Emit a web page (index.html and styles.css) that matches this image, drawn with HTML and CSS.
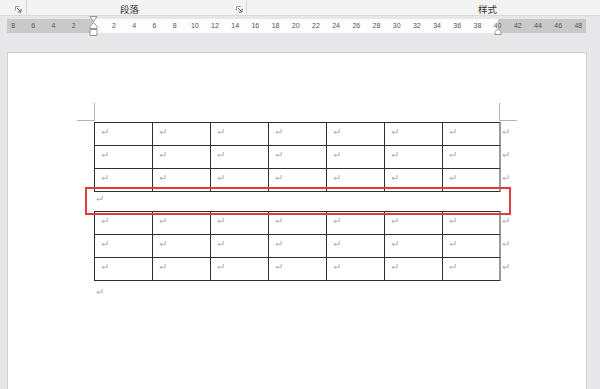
FILE: index.html
```html
<!DOCTYPE html>
<html lang="zh">
<head>
<meta charset="utf-8">
<title>表格</title>
<link rel="stylesheet" href="styles.css">
</head>
<body>
<div class="toolbar">
  <div class="grp g1">
    <svg class="launcher" width="7" height="7" viewBox="0 0 7 7"><path d="M0.5 4.5V0.5H4.5" stroke="#9a9a9a" fill="none"/><path d="M2 2L5.5 5.5M2.8 6H6V2.8" stroke="#555" fill="none" stroke-width="0.9"/></svg>
  </div>
  <div class="grp g2">
    <span class="label">段落</span>
    <svg class="launcher" width="7" height="7" viewBox="0 0 7 7"><path d="M0.5 4.5V0.5H4.5" stroke="#9a9a9a" fill="none"/><path d="M2 2L5.5 5.5M2.8 6H6V2.8" stroke="#555" fill="none" stroke-width="0.9"/></svg>
  </div>
  <div class="grp g3">
    <span class="label">样式</span>
  </div>
</div>

<div class="ruler-wrap">
  <div class="ruler">
    <span>8</span><span>6</span><span>4</span><span>2</span><span></span>
    <span>2</span><span>4</span><span>6</span><span>8</span><span>10</span><span>12</span><span>14</span><span>16</span><span>18</span><span>20</span>
    <span>22</span><span>24</span><span>26</span><span>28</span><span>30</span><span>32</span><span>34</span><span>36</span><span>38</span>
    <span>40</span><span>42</span><span>44</span><span>46</span><span>48</span>
  </div>
  <svg class="indent-left" width="10" height="22" viewBox="0 0 10 22">
    <path d="M1 1.5H8L4.5 6.5Z" fill="#fff" stroke="#8a8a8a" stroke-width="0.9"/>
    <path d="M4.5 7.5L8 11.5V13.5H1V11.5Z" fill="#fff" stroke="#8a8a8a" stroke-width="0.9"/>
    <path d="M1 14.5H8V20.5H1Z" fill="#fff" stroke="#8a8a8a" stroke-width="0.9"/>
  </svg>
  <svg class="indent-right" width="8" height="7" viewBox="0 0 8 7">
    <path d="M1 6.5V3.5L4 0.7L7 3.5V6.5Z" fill="#fff" stroke="#8a8a8a" stroke-width="0.9"/>
  </svg>
</div>

<div class="page">
  <div class="marks"><div class="mk-l"></div><div class="mk-gap"></div><div class="mk-r"></div></div>

  <div class="grid first">
    <div class="c"><i class="pm"></i></div><div class="c"><i class="pm"></i></div><div class="c"><i class="pm"></i></div><div class="c"><i class="pm"></i></div><div class="c"><i class="pm"></i></div><div class="c"><i class="pm"></i></div><div class="c r"><i class="pm"></i></div><div class="end"><i class="pm"></i></div>
    <div class="c"><i class="pm"></i></div><div class="c"><i class="pm"></i></div><div class="c"><i class="pm"></i></div><div class="c"><i class="pm"></i></div><div class="c"><i class="pm"></i></div><div class="c"><i class="pm"></i></div><div class="c r"><i class="pm"></i></div><div class="end"><i class="pm"></i></div>
    <div class="c b"><i class="pm"></i></div><div class="c b"><i class="pm"></i></div><div class="c b"><i class="pm"></i></div><div class="c b"><i class="pm"></i></div><div class="c b"><i class="pm"></i></div><div class="c b"><i class="pm"></i></div><div class="c r b"><i class="pm"></i></div><div class="end"><i class="pm"></i></div>
  </div>

  <div class="para gap"><i class="pm"></i></div>

  <div class="grid">
    <div class="c"><i class="pm"></i></div><div class="c"><i class="pm"></i></div><div class="c"><i class="pm"></i></div><div class="c"><i class="pm"></i></div><div class="c"><i class="pm"></i></div><div class="c"><i class="pm"></i></div><div class="c r"><i class="pm"></i></div><div class="end"><i class="pm"></i></div>
    <div class="c"><i class="pm"></i></div><div class="c"><i class="pm"></i></div><div class="c"><i class="pm"></i></div><div class="c"><i class="pm"></i></div><div class="c"><i class="pm"></i></div><div class="c"><i class="pm"></i></div><div class="c r"><i class="pm"></i></div><div class="end"><i class="pm"></i></div>
    <div class="c b"><i class="pm"></i></div><div class="c b"><i class="pm"></i></div><div class="c b"><i class="pm"></i></div><div class="c b"><i class="pm"></i></div><div class="c b"><i class="pm"></i></div><div class="c b"><i class="pm"></i></div><div class="c r b"><i class="pm"></i></div><div class="end"><i class="pm"></i></div>
  </div>

  <div class="para after"><i class="pm"></i></div>

  <div class="highlight"></div>
</div>
</body>
</html>
```

FILE: styles.css
```css
html, body {
  margin: 0;
  padding: 0;
}
body {
  width: 600px;
  height: 389px;
  overflow: hidden;
  background: #e7e6e9;
  font-family: "Liberation Sans", "Noto Sans CJK SC", sans-serif;
}

/* ribbon group strip */
.toolbar {
  display: flex;
  height: 15px;
  background: #f3f3f4;
  border-bottom: 1px solid #dadada;
}
.grp {
  display: flex;
  align-items: center;
  border-right: 1px solid #d6d6d6;
  height: 15px;
  box-sizing: border-box;
}
.g1 {
  width: 27px;
  justify-content: flex-end;
  padding-right: 4px;
  box-sizing: border-box;
}
.g2 {
  width: 220px;
}
.g3 {
  flex: 1;
  border-right: none;
}
.label {
  font-family: "Noto Sans CJK SC", sans-serif;
  font-size: 9.5px;
  line-height: 11px;
  color: #333;
  margin-top: 4px;
}
.g2 .label {
  margin-left: 93px;
}
.g3 .label {
  margin-left: 231px;
}
.launcher {
  display: block;
  margin-top: 3px;
}
.g2 .launcher {
  margin-left: auto;
  margin-right: 3px;
}

/* ruler */
.ruler-wrap {
  position: relative;
  margin-top: 3px;
  height: 14px;
}
.ruler {
  display: flex;
  margin-left: 3px;
  width: 586px;
  height: 14px;
  background: linear-gradient(to right,
    transparent 4px, #c9c9c9 4px, #c9c9c9 91px,
    #fdfdfd 91px, #fdfdfd 495px,
    #c9c9c9 495px, #c9c9c9 583px, transparent 583px);
}
.ruler span {
  flex: 0 0 20.2px;
  text-align: center;
  font-size: 7px;
  line-height: 14px;
  color: #555;
}
.indent-left {
  position: absolute;
  left: 89px;
  top: -4px;
}
.indent-right {
  position: absolute;
  left: 494px;
  top: 9px;
}

/* page */
.page {
  position: relative;
  margin: 19px 0 0 7px;
  width: 580px;
  height: 337px;
  box-sizing: border-box;
  background: #fff;
  border: 1px solid #d0d0d0;
  border-bottom: none;
  padding-top: 50px;
  overflow: hidden;
}
.marks {
  display: flex;
  margin-left: 69px;
}
.mk-l {
  width: 17px;
  height: 17px;
  border-right: 1px solid #b4b4b4;
  border-bottom: 1px solid #b4b4b4;
}
.mk-gap {
  width: 404px;
}
.mk-r {
  width: 17px;
  height: 17px;
  border-left: 1px solid #b4b4b4;
  border-bottom: 1px solid #b4b4b4;
}

.grid {
  display: grid;
  grid-template-columns: repeat(6, 58px) 59px 12px;
  grid-template-rows: 23px 23px 24px;
  margin-left: 86px;
}
.grid.first {
  margin-top: 1px;
}
.c {
  box-sizing: border-box;
  border-left: 1px solid #2e2e2e;
  border-top: 1px solid #2e2e2e;
  padding-left: 6px;
}
.c.r {
  border-right: 2px solid #9a9a9a;
}
.c.b {
  border-bottom: 1px solid #2e2e2e;
}
.end {
  padding-left: 1px;
  padding-top: 1px;
}

.pm {
  display: block;
  width: 7px;
  height: 5px;
  margin-top: 6px;
  background: url("data:image/svg+xml,%3Csvg xmlns='http://www.w3.org/2000/svg' width='7' height='5' viewBox='0 0 7 5'%3E%3Cpath d='M6.2 0V3.3H1M2.6 1.7L1 3.3L2.6 4.9' stroke='%23a6a6a6' stroke-width='0.9' fill='none'/%3E%3C/svg%3E") no-repeat;
}
.para {
  margin-left: 88px;
}
.para.gap {
  height: 15px;
}
.para.gap .pm {
  margin-top: 4px;
}
.para.after .pm {
  margin-top: 8px;
}

.highlight {
  position: absolute;
  left: 77px;
  top: 134px;
  width: 426px;
  height: 28px;
  box-sizing: border-box;
  border: 2px solid #e23b3e;
}
```
